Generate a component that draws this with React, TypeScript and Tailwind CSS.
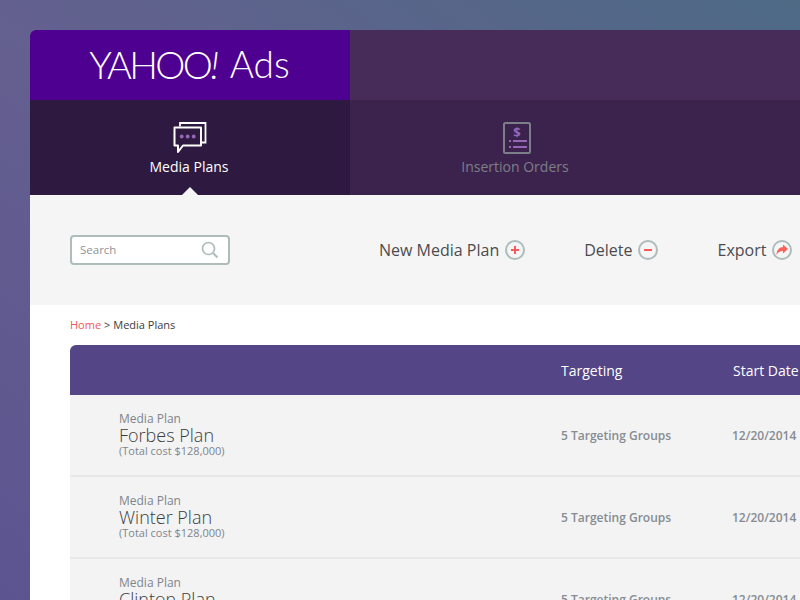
import React from "react";

const sans = "font-['Open_Sans',sans-serif]";

function ChatIcon() {
  return (
    <svg width="34" height="32" viewBox="0 0 34 32" fill="none">
      <path d="M7 4.5V1H32.5V20.5H29" stroke="#fff" strokeWidth="1.8" />
      <path
        d="M2.5 5.5H28V23.5H10L5 30V23.5H1.5V5.5Z"
        fill="#2e1a40"
        stroke="#fff"
        strokeWidth="2"
        strokeLinejoin="round"
      />
      <circle cx="8.7" cy="14.5" r="1.9" fill="#9767b5" />
      <circle cx="14.7" cy="14.5" r="1.9" fill="#9767b5" />
      <circle cx="20.7" cy="14.5" r="1.9" fill="#9767b5" />
    </svg>
  );
}

function OrderIcon() {
  return (
    <svg width="28" height="32" viewBox="0 0 28 32" fill="none">
      <rect x="1" y="1" width="26" height="30" rx="1.5" stroke="#7d7f88" strokeWidth="2" />
      <text
        x="14"
        y="15"
        textAnchor="middle"
        fontSize="13"
        fontWeight="700"
        fontFamily="Open Sans"
        fill="#9767b5"
      >
        $
      </text>
      <path d="M6 19H8M10 19H24M6 25H8M10 25H24" stroke="#9767b5" strokeWidth="2" />
    </svg>
  );
}

function ActionButton({
  label,
  className,
  iconClass = "",
  children,
}: {
  label: string;
  className: string;
  iconClass?: string;
  children: React.ReactNode;
}) {
  return (
    <div className={`flex items-center gap-[5px] shrink-0 ${className}`}>
      <span className="text-[16px] text-[#4c4c4e]">{label}</span>
      <span className={`w-5 h-5 rounded-full border-2 border-[#aebcbc] flex items-center justify-center ${iconClass}`}>
        {children}
      </span>
    </div>
  );
}

function PlanRow({ name }: { name: string }) {
  return (
    <div className="h-[82px] shrink-0 flex bg-[#f3f3f3] border-b-2 border-[#e8e8e8]">
      <div className="w-[491px] shrink-0 pl-[49px] pt-[17px]">
        <div className="text-[12px] leading-[14px] text-[#7e858c]">Media Plan</div>
        <div className="text-[18px] leading-[19px] font-light text-[#3c3c3e]">{name}</div>
        <div className="text-[11px] leading-[12px] text-[#7e858c]">(Total cost $128,000)</div>
      </div>
      <div className="w-[171px] shrink-0 pt-[33px] text-[12px] leading-[16px] font-semibold text-[#868c92]">
        5 Targeting Groups
      </div>
      <div className="pt-[33px] text-[12px] leading-[16px] font-semibold text-[#868c92] whitespace-nowrap">
        12/20/2014
      </div>
    </div>
  );
}

export default function App() {
  return (
    <div
      className={`${sans} w-[800px] h-[600px] overflow-hidden pl-[30px] pt-[30px] bg-[linear-gradient(215deg,#4d6a85_0%,#64608f_50%,#5c5490_100%)]`}
    >
      <div className="w-[770px] h-[570px] rounded-tl-[6px] overflow-hidden flex flex-col bg-white">
        {/* Brand row */}
        <div className="h-[70px] shrink-0 flex bg-[#472c59]">
          <div className="w-[320px] shrink-0 bg-[#4e0090] flex items-center justify-center gap-[13px] pb-[3px] pr-[1px] text-white font-['Lato',sans-serif] font-light">
            <span className="text-[38px] tracking-[-2.6px] leading-none">
              YAHOO<span className="italic">!</span>
            </span>
            <span className="text-[37px] leading-none">Ads</span>
          </div>
        </div>

        {/* Tabs */}
        <div className="h-[95px] shrink-0 flex bg-[#3c234e]">
          <div className="relative w-[320px] shrink-0 bg-[#2e1a40] flex flex-col items-center pt-[22px]">
            <ChatIcon />
            <span className="text-[14px] leading-[20px] text-white mt-[3px] -ml-[2px]">Media Plans</span>
            <div className="absolute bottom-0 left-1/2 -translate-x-1/2 border-x-[8px] border-b-[8px] border-x-transparent border-b-[#f5f5f5]" />
          </div>
          <div className="w-[330px] shrink-0 flex flex-col items-center pt-[22px]">
            <div className="ml-[4px]">
              <OrderIcon />
            </div>
            <span className="text-[14px] leading-[20px] text-[#7d7f88] mt-[3px]">Insertion Orders</span>
          </div>
        </div>

        {/* Toolbar */}
        <div className="h-[110px] shrink-0 bg-[#f5f5f5] flex items-center pl-[40px]">
          <div className="w-[160px] h-[30px] shrink-0 rounded-[4px] border-2 border-[#aebcbc] bg-white flex items-center justify-between pl-2 pr-[9px]">
            <span className="text-[11.5px] text-[#8f9497]">Search</span>
            <svg width="18" height="18" viewBox="0 0 18 18" fill="none">
              <circle cx="7.5" cy="7.5" r="6" stroke="#aebcbc" strokeWidth="1.7" />
              <path d="M12 12L16.5 16.5" stroke="#aebcbc" strokeWidth="2" />
            </svg>
          </div>
          <ActionButton label="New Media Plan" className="ml-[149px]" iconClass="ml-[1px]">
            <svg width="10" height="10" viewBox="0 0 10 10">
              <path d="M5 1V9M1 5H9" stroke="#f85a5a" strokeWidth="2" />
            </svg>
          </ActionButton>
          <ActionButton label="Delete" className="ml-[59px]">
            <svg width="10" height="10" viewBox="0 0 10 10">
              <path d="M1 5H9" stroke="#f85a5a" strokeWidth="2" />
            </svg>
          </ActionButton>
          <ActionButton label="Export" className="ml-[60px]" iconClass="ml-[1px]">
            <svg width="14" height="14" viewBox="0 0 14 14">
              <path d="M8 1.5L13 6L8 10.5V8C5 8 3 9 1.5 12C1.5 7.5 4 4.5 8 4Z" fill="#f8645a" />
            </svg>
          </ActionButton>
        </div>

        {/* Content */}
        <div className="flex-1 min-h-0 pl-[40px] flex flex-col">
          <div className="h-[40px] shrink-0 flex items-center pt-[1px] text-[11px] text-[#3c3c3e]">
            <span className="text-[#f25757]">Home</span>
            <span className="ml-[3px]">&gt; Media Plans</span>
          </div>
          <div className="w-[730px] flex flex-col rounded-tl-[6px] overflow-hidden">
            <div className="h-[50px] shrink-0 flex items-center bg-[#544587] text-[14px] text-white">
              <span className="ml-[491px] w-[172px] shrink-0">Targeting</span>
              <span className="whitespace-nowrap">Start Date</span>
            </div>
            <PlanRow name="Forbes Plan" />
            <PlanRow name="Winter Plan" />
            <PlanRow name="Clinton Plan" />
          </div>
        </div>
      </div>
    </div>
  );
}
